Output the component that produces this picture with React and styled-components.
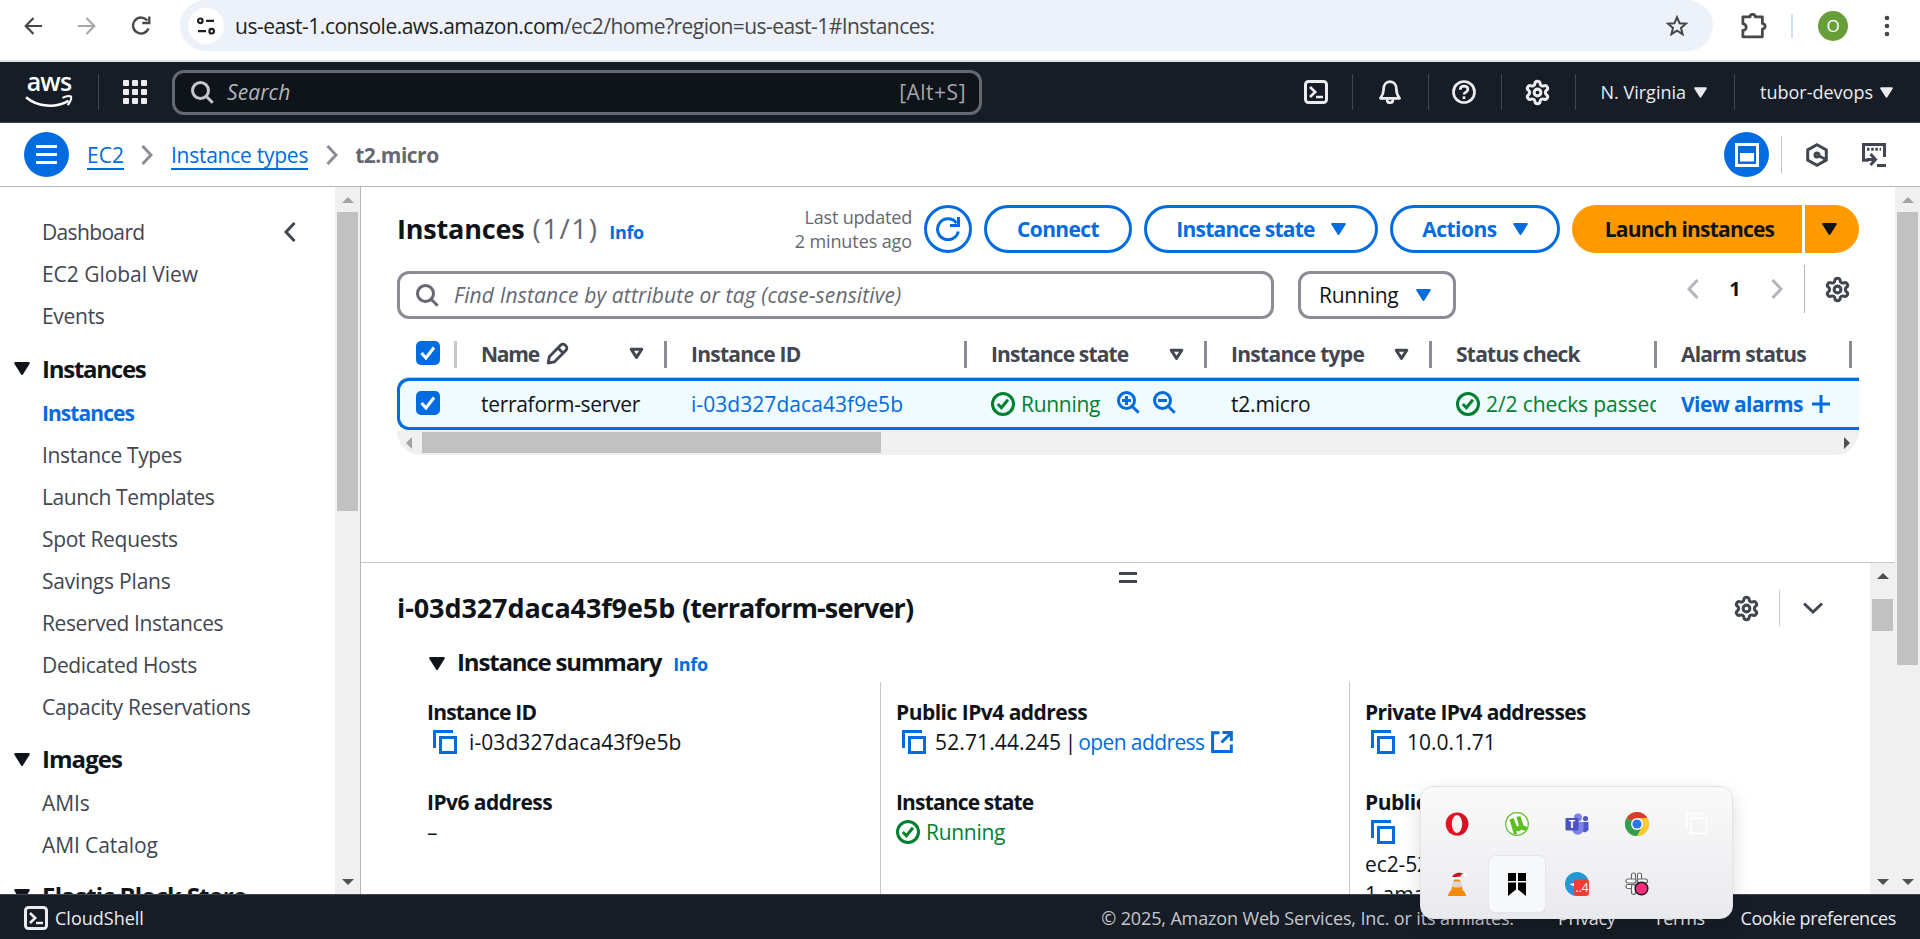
import React from "react";
import styled, { createGlobalStyle, css } from "styled-components";
import { Settings } from "lucide-react";

const BLUE = "#006ce0";
const INK = "#0f141a";
const GREY = "#424650";
const GREEN = "#00802f";

const Global = createGlobalStyle`
  * { box-sizing: border-box; }
  body { margin: 0; background: #fff; overflow: hidden; }
  svg { display: block; flex: none; }
`;

const Page = styled.div`
  width: 1920px;
  height: 939px;
  position: relative;
  display: flex;
  flex-direction: column;
  overflow: hidden;
  font: 400 21px/30px "Open Sans", "Noto Sans", sans-serif;
  color: ${INK};
`;

const Text = styled.span`
  white-space: pre;
  letter-spacing: ${(p) => p.$ls || 0}px;
  ${(p) => p.$size && css`font-size: ${p.$size}px;`}
  ${(p) => p.$bold && css`font-weight: 700;`}
  ${(p) => p.$italic && css`font-style: italic;`}
  ${(p) => p.$color && css`color: ${p.$color};`}
`;
const Tint = styled.div`
  color: ${(p) => p.$color};
  padding-bottom: ${(p) => p.$lift || 0}px;
`;

const Spacer = styled.div`flex: 1;`;
const Gap = styled.div`flex: none; width: ${(p) => p.$w}px;`;
const Rule = styled.div`
  flex: none;
  width: ${(p) => p.$w || 1}px;
  height: ${(p) => p.$h}px;
  background: ${(p) => p.$color};
`;

/* ---------- icons ---------- */
const Svg = ({ w = 24, h = w, vb = `0 0 ${w} ${h}`, sw = 3, fill = "none", stroke = "currentColor", children, ...r }) => (
  <svg width={w} height={h} viewBox={vb} fill={fill} stroke={stroke} strokeWidth={sw} {...r}>{children}</svg>
);
const Caret = ({ w = 15, h = 12 }) => (
  <Svg w={w} h={h} vb="0 0 15 12" sw="2" fill="currentColor" strokeLinejoin="round"><path d="M1.2 1h12.6L7.5 11z" /></Svg>
);
const Sort = () => (
  <Svg w={15} h={13} sw="3" strokeLinejoin="round"><path d="M2.2 2.200h10.600L7.500 10.400z" /></Svg>
);
const Angle = ({ dir = "left", w = 12, h = 20 }) => (
  <Svg w={w} h={h} vb="0 0 12 20" sw="3"><path d={dir === "left" ? "M10.5 1 2 10l8.500 9" : "M1.500 1 10 10l-8.500 9"} /></Svg>
);
const AngleDown = () => <Svg w={20} h={12} sw="3"><path d="M1 1.500 10 10l9-8.500" /></Svg>;
const Magnifier = ({ w = 23, sw = 3, sign }) => (
  <Svg w={w} vb="0 0 23 23" sw={sw}>
    <circle cx="9.500" cy="9.500" r="8" />
    <path d="m15.200 15.200 6.500 6.500" />
    {sign && <path d={sign === "plus" ? "M5 9.500h9M9.500 5v9" : "M5 9.500h9"} />}
  </Svg>
);
const ShellIcon = () => (
  <Svg><rect x="1.500" y="1.500" width="21" height="21" rx="3" /><path d="m6 7 5.200 5-5.200 5M12 17h7" strokeWidth="2.600" /></Svg>
);
const Bell = () => (
  <Svg sw="2.700" strokeLinejoin="round"><path d="M5.600 9.500C5.600 5 8 1.700 12 1.700s6.400 3.300 6.400 7.800c0 4.500.9 5.800 3.200 8.800H2.400c2.300-3 3.200-4.300 3.200-8.800z" /><path d="M9.200 19v1.200a2.800 2.500 0 0 0 5.600 0V19" /></Svg>
);
const Help = () => (
  <Svg sw="2.700"><circle cx="12" cy="12" r="10.500" /><path d="M8.200 9.700C8.300 7.300 10 6.200 12 6.200c2.200 0 3.900 1.200 3.900 3.200 0 2.600-3.900 2.700-3.900 5.200" /><path d="M12 16.300v2.800" /></Svg>
);
const Gear = () => <Settings size={27} strokeWidth={2.7} />;
const StatusOk = () => (
  <Svg><circle cx="12" cy="12" r="10.500" /><path d="m6.800 12 3.600 3.800 6.500-8" /></Svg>
);
const Copy = () => (
  <Svg stroke={BLUE}><path d="M20 1.500H1.500V18" /><rect x="7.500" y="7.500" width="15" height="15" /></Svg>
);
const External = () => (
  <Svg w={22} sw="3"><path d="M8.500 1.800H1.600v18.700h18.700V13.500" /><path d="M11.500 1.600h8.800v8.300M20 2l-9.500 9.500" /></Svg>
);
const Pencil = () => (
  <Svg w={23} sw="2.800" strokeLinejoin="round"><path d="M2.200 21l1.100-6.300L14.800 3a3 3 0 0 1 4.200 0l1 1a3 3 0 0 1 0 4.200L8.500 19.800z" /><path d="m12 6 5 5" /></Svg>
);
const AwsSmile = () => (
  <Svg w={48} h={13} sw="2.500"><path d="M1 2.200C13 12.500 31 13 43.500 5.800" /><path d="M37.500 2.800c3-1.500 7-2 8.500-1.300.8 1.600-.7 6-3.400 8.600" strokeWidth="2" /></Svg>
);
const AppGrid = () => (
  <Svg stroke="none" fill="currentColor">{[0, 9, 18].map((y) => [0, 9, 18].map((x) => <rect key={x + "-" + y} x={x} y={y} width="6" height="6" rx="1" />))}</Svg>
);

/* ---------- browser bar ---------- */
const BrowserBar = styled.div`
  height: 62px;
  flex: none;
  display: flex;
  border-bottom: 2px solid #dee5e4;
  color: #474747;
`;
const NavButtons = styled.div`
  width: 180px;
  height: 51px;
  padding-left: 24px;
  display: flex;
  align-items: center;
  gap: 35.5px;
`;
const UrlPill = styled.div`
  width: 1533px;
  height: 51px;
  border-radius: 26px;
  background: #ecf1fa;
  display: flex;
  align-items: center;
  padding: 0 25px 0 8px;
`;
const SiteInfo = styled.div`
  width: 36px;
  height: 36px;
  border-radius: 50%;
  background: #fff;
  display: grid;
  place-items: center;
  margin-right: 11px;
`;
const BrowserTools = styled.div`
  flex: 1;
  height: 51px;
  display: flex;
  align-items: center;
  padding-left: 28px;
`;
const Avatar = styled.div`
  width: 30px;
  height: 30px;
  border-radius: 50%;
  background: #689f38;
  color: #fff;
  display: grid;
  place-items: center;
  font-size: 17px;
`;

/* ---------- console header ---------- */
const ConsoleHeader = styled.header`
  height: 61px;
  flex: none;
  background: #161d26;
  border-bottom: 1px solid #424650;
  color: #ebebf0;
  display: flex;
  align-items: center;
  padding-left: 25px;
`;
const AwsLogo = styled.div`
  width: 48px;
  height: 36px;
  display: flex;
  flex-direction: column;
  align-items: center;
  color: #fff;
  span { font-size: 25px; line-height: 21px; height: 24px; font-weight: 600; letter-spacing: -0.8px; margin-top: -3px; }
`;
const SearchBox = styled.div`
  width: 810px;
  height: 45px;
  border: 3px solid #656871;
  border-radius: 12px;
  background: #0f141a;
  display: flex;
  align-items: center;
  padding: 0 13px 0 16px;
  color: #c6c6cd;
`;
const IconSlot = styled.div`
  width: ${(p) => p.$w}px;
  padding-right: ${(p) => p.$pr || 0}px;
  display: grid;
  place-items: center;
  flex: none;
`;

/* ---------- breadcrumb bar ---------- */
const CrumbBar = styled.nav`
  height: 64px;
  flex: none;
  border-bottom: 1px solid #b4b4bb;
  display: flex;
  align-items: center;
  padding-left: 24px;
  color: #8c8c94;
`;
const RoundButton = styled.div`
  width: 45px;
  height: 45px;
  border-radius: 50%;
  background: ${BLUE};
  color: #fff;
  display: grid;
  place-items: center;
  flex: none;
`;
const CrumbLink = styled(Text)`
  color: ${BLUE};
  border-bottom: 2px solid ${BLUE};
  line-height: 26px;
  margin-top: 2px;
`;

/* ---------- body ---------- */
const Body = styled.div`
  height: 707px;
  flex: none;
  display: flex;
`;
const Sidebar = styled.aside`
  width: 335px;
  padding-top: 24px;
  overflow: hidden;
  color: ${GREY};
`;
const NavItem = styled.div`
  height: 42px;
  padding: 0 39px 0 42px;
  display: flex;
  align-items: center;
  justify-content: space-between;
`;
const NavGroup = styled.div`
  height: 54.5px;
  margin-top: ${(p) => p.$mt || 0}px;
  padding: 9px 0 0 14px;
  display: flex;
  align-items: center;
  gap: 12px;
  color: ${INK};
`;

const VTrack = styled.div`
  width: 25px;
  flex: none;
  background: #f0f0f0;
  display: flex;
  flex-direction: column;
  align-items: center;
  padding: 10px 0 9px;
`;
const VThumb = styled.div`
  width: 21px;
  height: ${(p) => p.$h}px;
  margin-top: ${(p) => p.$mt}px;
  background: #c1c1c1;
`;
const Tri = styled.div`
  width: 0;
  height: 0;
  flex: none;
  border: 6px solid transparent;
  ${(p) => p.$d === "up" && css`border-width: 0 6px 6px; border-bottom-color: ${p.$c};`}
  ${(p) => p.$d === "down" && css`border-width: 6px 6px 0; border-top-color: ${p.$c};`}
  ${(p) => p.$d === "left" && css`border-width: 6px 6px 6px 0; border-right-color: ${p.$c};`}
  ${(p) => p.$d === "right" && css`border-width: 6px 0 6px 6px; border-left-color: ${p.$c};`}
`;
const VScroll = ({ thumb, mt, atTop }) => (
  <VTrack>
    <Tri $d="up" $c={atTop ? "#a3a3a3" : "#505050"} />
    <VThumb $h={thumb} $mt={mt} />
    <Spacer />
    <Tri $d="down" $c="#505050" />
  </VTrack>
);

const Main = styled.main`
  flex: 1;
  min-width: 0;
  border-left: 1px solid #b4b4bb;
  display: flex;
  flex-direction: column;
`;
const ListPanel = styled.section`
  height: 375px;
  padding: 18px 36px 0;
`;
const TitleRow = styled.div`
  height: 48px;
  display: flex;
  align-items: center;
`;
const TitleText = styled.div`
  display: flex;
  align-items: baseline;
  height: 38px;
  line-height: 36px;
`;
const Updated = styled.div`
  display: flex;
  flex-direction: column;
  align-items: flex-end;
  line-height: 24px;
  color: #656871;
  margin-right: 12px;
`;
const Button = styled.div`
  height: 48px;
  width: ${(p) => p.$w}px;
  border: 3px solid ${BLUE};
  border-radius: 24px;
  color: ${BLUE};
  display: flex;
  align-items: center;
  justify-content: center;
  gap: 16px;
  margin-right: 12px;
`;
const LaunchPart = styled.div`
  width: ${(p) => p.$w}px;
  height: 48px;
  background: #ff9900;
  color: ${INK};
  display: grid;
  place-items: center;
  border-radius: ${(p) => (p.$end ? "0 24px 24px 0" : "24px 0 0 24px")};
  margin-right: ${(p) => (p.$end ? 0 : 3)}px;
  padding: ${(p) => (p.$end ? "0 6px 0 0" : "0 0 0 5px")};
`;
const FilterRow = styled.div`
  height: 48px;
  margin-top: 18px;
  display: flex;
`;
const Field = styled.div`
  width: ${(p) => p.$w}px;
  height: 48px;
  border: 3px solid #8c8c94;
  border-radius: 12px;
  display: flex;
  align-items: center;
  padding: 0 17px 0 ${(p) => p.$pl}px;
  color: #656871;
`;
const Pager = styled.div`
  height: 48px;
  margin: -6px 8px 0 0;
  display: flex;
  align-items: center;
  color: #b4b4bb;
`;
const Table = styled.div`margin-top: 22px;`;
const COLS = "60px 210px 300px 240px 225px 225px 195px 7px";
const HeadRow = styled.div`
  height: 36px;
  display: grid;
  grid-template-columns: ${COLS};
  color: ${GREY};
`;
const HeadCell = styled.div`
  height: 27px;
  border-right: 3px solid ${(p) => p.$sep || "#8c8c94"};
  padding: 0 ${(p) => p.$pr || 20}px ${(p) => p.$pb || 1}px ${(p) => p.$pl || 24}px;
  display: flex;
  align-items: center;
`;
const DataRow = styled.div`
  height: 52px;
  border: solid ${BLUE};
  border-width: 3px 0 3px 3px;
  border-radius: 12px 0 0 12px;
  background: #f0fbff;
  box-shadow: 0 -1px 0 #c6c6cd;
  display: grid;
  grid-template-columns: ${COLS};
  margin-top: 1px;
`;
const Cell = styled.div`
  height: 46px;
  margin-right: 4px;
  padding: 0 0 ${(p) => p.$pb ?? 1}px ${(p) => p.$pl ?? 21}px;
  display: flex;
  align-items: center;
  overflow: hidden;
  color: ${(p) => p.$color || INK};
`;
const Box = styled.div`
  width: 24px;
  height: 24px;
  flex: none;
  border-radius: 5px;
  background: ${BLUE};
  color: #fff;
  display: grid;
  place-items: center;
`;
const Checkbox = () => <Box><Svg w={16} h={14} sw="3"><path d="m1.500 7 4.500 5L14 1.500" /></Svg></Box>;
const HTrack = styled.div`
  height: 25px;
  border-radius: 0 0 24px 24px;
  background: #f0f0f0;
  display: flex;
  align-items: center;
  padding: 0 9px;
`;
const HThumb = styled.div`
  width: 459px;
  height: 21px;
  margin-left: 10px;
  background: #c1c1c1;
`;

const SplitPanel = styled.section`
  flex: 1;
  min-height: 0;
  border-top: 1px solid #c6c6cd;
  display: flex;
`;
const SplitContent = styled.div`
  flex: 1;
  min-width: 0;
  overflow: hidden;
`;
const Grip = styled.div`
  width: 18px;
  height: 11px;
  margin: 9px 0 0 758px;
  border: solid ${GREY};
  border-width: 3px 0;
`;
const SplitHead = styled.div`
  height: 36px;
  margin-top: 7px;
  padding: 0 47px 0 36px;
  display: flex;
  align-items: center;
  color: ${GREY};
`;
const SummaryHead = styled.div`
  height: 36px;
  margin: 19px 0 0 68px;
  display: flex;
  align-items: center;
`;
const Baseline = styled.div`
  display: flex;
  align-items: baseline;
  margin-left: 12px;
`;
const Details = styled.div`
  height: 240px;
  margin-top: 1px;
  padding-left: 50px;
  display: grid;
  grid-template-columns: 469px 469px 1fr;
`;
const DetailCol = styled.div`
  padding: 15px 0 0 ${(p) => (p.$first ? 16 : 15)}px;
  ${(p) => !p.$first && css`border-left: 1px solid #c6c6cd;`}
`;
const Line = styled.div`
  height: 30px;
  padding-left: ${(p) => p.$pl || 0}px;
  display: flex;
  align-items: center;
  color: ${(p) => p.$color || INK};
`;
const LineGap = styled.div`height: ${(p) => p.$h || 30}px;`;

const Footer = styled.footer`
  height: 45px;
  flex: none;
  border-top: 1px solid #424650;
  background: #161d26;
  color: #ebebf0;
  display: flex;
  align-items: center;
  padding: 2px 24px 0 24px;
`;

/* ---------- system tray flyout ---------- */
const Tray = styled.div`
  position: absolute;
  left: 1420px;
  top: 786px;
  width: 313px;
  height: 133px;
  border: 1px solid #e3e3e5;
  border-radius: 13px;
  background: linear-gradient(#fafafa, #e9eaee);
  box-shadow: 0 8px 20px rgba(0, 0, 0, 0.14);
  display: grid;
  grid-template-columns: repeat(5, 60px);
  grid-template-rows: 60px 60px;
  padding: 7px 6px;
`;
const TrayTile = styled.div`
  display: grid;
  place-items: center;
  margin: 2px;
  border-radius: 6px;
  ${(p) => p.$on && css`background: #f7f8fa; box-shadow: 0 0 0 1px #e6e7e9, 0 1px 2px #d4d5d8;`}
`;
const TrayText = styled.text`
  font-family: "Open Sans", sans-serif;
  stroke: none;
`;

const Tray24 = (p) => <Svg w={24} sw="0" {...p} />;

const trayIcons = [
  <Tray24 key="opera"><ellipse cx="12" cy="12" rx="11.300" ry="11.500" fill="#e81227" /><path d="M12 .5a11.400 11.500 0 0 1 0 23z" fill="#c80f20" opacity=".55" /><ellipse cx="12" cy="12" rx="5.200" ry="9" fill="#f4f4f5" /></Tray24>,
  <Tray24 key="ut"><circle cx="12" cy="12" r="11.300" fill="#fff" stroke="#5bbf21" strokeWidth="1.200" /><path d="M4.500 7.500 8.500 6l3 7.500c.6 1.500 2.700.8 2.200-.8L11.300 5l4-1 3.300 9.500 3.600 1.500-1 3.300c-2 .7-3.700.3-4.700-1-1 2-4 2.500-5.300 1.500l.9 3.400-3.200.3z" fill="#5bbf21" /></Tray24>,
  <Tray24 key="teams"><circle cx="13" cy="5.500" r="4" fill="#7b83eb" /><circle cx="20.500" cy="6.500" r="2.600" fill="#5059c9" /><path d="M16 10h7.500v7.500a4 4 0 0 1-6 2z" fill="#5059c9" /><path d="M7 10h11.500v7a5.700 5.700 0 0 1-11.500 0z" fill="#7b83eb" /><rect x=".5" y="6" width="13" height="12.500" rx="1" fill="#4b53bc" /><TrayText x="3.700" y="16" fontSize="11" fontWeight="700" fill="#fff">T</TrayText></Tray24>,
  <Tray24 key="chrome"><circle cx="12" cy="12" r="12" fill="#fcc934" /><path d="M12 12 1.600 6A12 12 0 0 1 22.400 6z" fill="#db3a2d" /><path d="M1.600 6A12 12 0 0 0 12 24l5.200-9L12 12z" fill="#2f9e4f" /><path d="M12 6h10.400A12 12 0 0 1 12 24l5.200-9z" fill="#fcc934" /><circle cx="12" cy="12" r="6" fill="#fff" /><circle cx="12" cy="12" r="4.600" fill="#2a76ea" /></Tray24>,
  <Tray24 key="copy" sw="1.500" stroke="#fff"><path d="M19 1.500H2V17" /><rect x="6" y="6" width="15.500" height="15.500" /></Tray24>,
  <Tray24 key="vlc"><path d="M5 19h14l2.500 5h-19z" fill="#f58a07" /><path d="M9.500 6h5l4 15c-3 1.800-10 1.800-13 0z" fill="#f58a07" /><path d="M8.500 9.500h7l1.400 5c-2 1.300-7.800 1.300-9.800 0z" fill="#d9d9d9" /><path d="M7 5.500C8 1 14 -.5 19 1.500c-2 .2-3 1-3.500 3z" fill="#d4101a" /><path d="M6.500 5h9.500v2.500H6.500z" fill="#fff" /><circle cx="20" cy="2.500" r="2" fill="#fff" /></Tray24>,
  <Tray24 key="mark" fill="#000"><path d="M3 1h8v8H3zM13 1h8v8h-8zM3 10.500h8v7L3 24zM13 10.500h8V24l-8-6.500z" /></Tray24>,
  <Tray24 key="telegram"><circle cx="12" cy="12" r="12" fill="#2498d3" /><path d="m4.500 12.500 7-2.500v5z" fill="#fff" /><rect x="9" y="7.500" width="15" height="16.500" rx="3" fill="#f43c35" /><TrayText x="10.500" y="20" fontSize="12" fill="#fff">..4</TrayText></Tray24>,
  <Tray24 key="slack" stroke="#666" sw="1.200" fill="#fff"><rect x="6.500" y="1" width="4" height="10" rx="2" /><rect x="12.500" y="1" width="4" height="10" rx="2" /><rect x="1" y="7" width="10" height="4" rx="2" /><rect x="12.500" y="7" width="10" height="4" rx="2" /><rect x="1" y="12.500" width="10" height="4" rx="2" /><rect x="6.500" y="12.500" width="4" height="10" rx="2" /><circle cx="16.500" cy="16.500" r="6.300" fill="#f72e7c" stroke="#1b1b1b" strokeWidth="1.500" /></Tray24>,
];

const services = [["Dashboard", -0.65], ["EC2 Global View", -0.05], ["Events", -0.3]];
const instanceLinks = [
  ["Instance Types", -0.35], ["Launch Templates", -0.39], ["Spot Requests", -0.3], ["Savings Plans", -0.2],
  ["Reserved Instances", -0.4], ["Dedicated Hosts", -0.35], ["Capacity Reservations", -0.25],
];
const imageLinks = [["AMIs", -0.1], ["AMI Catalog", -0.1]];

export default function App() {
  return (
    <Page>
      <Global />
      <BrowserBar>
        <NavButtons>
          <Svg w={18} h={18} sw="2.200"><path d="M18 9H2M9.500 1 1.700 9l7.800 8" /></Svg>
          <Svg w={18} h={18} sw="2.200" stroke="#a8a8a8"><path d="M0 9h16M8.500 1l7.800 8-7.800 8" /></Svg>
          <Svg w={20} h={19} sw="2.300"><path d="M17.500 12.500A8 8 0 1 1 16.300 4.500" /><path d="M18.300.5V7h-7" /></Svg>
        </NavButtons>
        <UrlPill>
          <SiteInfo>
            <Svg w={18} h={18} sw="2.200" stroke="#1f1f1f"><circle cx="3.300" cy="3.800" r="2.300" /><path d="M9 3.800h8M1 14.200h8" /><circle cx="14.700" cy="14.200" r="2.300" /></Svg>
          </SiteInfo>
          <Text $ls={-0.5} $color="#1f1f1f">us-east-1.console.aws.amazon.com</Text>
          <Text $ls={-0.55}>/ec2/home?region=us-east-1#Instances:</Text>
          <Spacer />
          <Svg w={22} h={21} sw="2"><path d="m11 2.200 2.500 6 6.500.5-5 4.200 1.600 6.300L11 15.700l-5.600 3.500L7 12.900 2 8.700l6.500-.5z" /></Svg>
        </UrlPill>
        <BrowserTools>
          <Svg w={26} h={26} vb="0.500 1 23.500 23.500" sw="2.500"><path d="M2.200 4.500h6.500a2.200 2.200 0 0 1 4.600 0h6.500v6a2.400 2.400 0 0 1 0 5v7H2.200v-5.700a3 3 0 0 0 0-6z" strokeLinejoin="round" /></Svg>
          <Gap $w={24} />
          <Rule $h={24} $w={2} $color="#d0e0fb" />
          <Gap $w={25} />
          <Avatar>O</Avatar>
          <Gap $w={36} />
          <Svg w={6} h={22} stroke="none" fill="#474747"><circle cx="3" cy="3" r="2.300" /><circle cx="3" cy="11" r="2.300" /><circle cx="3" cy="19" r="2.300" /></Svg>
        </BrowserTools>
      </BrowserBar>

      <ConsoleHeader>
        <AwsLogo><span>aws</span><AwsSmile /></AwsLogo>
        <Gap $w={25} /><Rule $h={36} $color="#424650" /><Gap $w={24} />
        <AppGrid />
        <Gap $w={25} />
        <SearchBox>
          <Magnifier />
          <Gap $w={13} />
          <Text $italic $ls={0.1} $color="#b4b4bb">Search</Text>
          <Spacer />
          <Text $ls={0.5} $color="#a4a4ad">[Alt+S]</Text>
        </SearchBox>
        <Spacer />
        <IconSlot $w={72}><ShellIcon /></IconSlot><Rule $h={36} $color="#424650" />
        <IconSlot $w={75}><Bell /></IconSlot><Rule $h={36} $color="#424650" />
        <IconSlot $w={72} $pr={2}><Help /></IconSlot><Rule $h={36} $color="#424650" />
        <IconSlot $w={73} $pr={1}><Gear /></IconSlot><Rule $h={36} $color="#424650" />
        <Gap $w={25} />
        <Text $size={18}>N. Virginia</Text><Gap $w={8} /><Caret w={13} h={11} />
        <Gap $w={27} /><Rule $h={36} $color="#424650" /><Gap $w={25} />
        <Text $size={18}>tubor-devops</Text><Gap $w={7} /><Caret w={13} h={11} />
        <Gap $w={27} />
      </ConsoleHeader>

      <CrumbBar>
        <RoundButton><Svg w={21} h={19}><path d="M0 1.500h21M0 9.500h21M0 17.500h21" /></Svg></RoundButton>
        <Gap $w={18} />
        <CrumbLink $ls={0}>EC2</CrumbLink>
        <Gap $w={17} /><Angle dir="right" /><Gap $w={18} />
        <CrumbLink $ls={-0.25}>Instance types</CrumbLink>
        <Gap $w={18} /><Angle dir="right" /><Gap $w={17} />
        <Text $bold $ls={-0.5} $color="#656871">t2.micro</Text>
        <Spacer />
        <RoundButton><Svg><rect x="1.500" y="1.500" width="21" height="21" /><rect x="5" y="10" width="14" height="8.500" fill="#fff" stroke="none" /></Svg></RoundButton>
        <Gap $w={12} /><Rule $h={37} $color="#c6c6cd" /><Gap $w={23} />
        <Svg stroke={GREY}><path d="m12 1.800 9.300 5.200v10L12 22.200 2.700 17V7z" /><circle cx="12" cy="12" r="2" /><path d="m12 12 8 4" /></Svg>
        <Gap $w={33} />
        <Svg stroke={GREY}><path d="M6.500 17.300H1.500V1.500h21V14M15 22.500h9M4.500 16.500h8M8.500 11l5 5.500-5 5.500" /><path d="M5 6.300h14" strokeDasharray="2.500 1.700" /></Svg>
        <Gap $w={34} />
      </CrumbBar>

      <Body>
        <Sidebar>
          {services.map(([t, ls], i) => (
            <NavItem key={t}><Text $ls={ls}>{t}</Text>{i === 0 && <Angle />}</NavItem>
          ))}
          <NavGroup><Caret w={16} h={13} /><Text $bold $size={24} $ls={-1.25}>Instances</Text></NavGroup>
          <NavItem><Text $bold $ls={-0.94} $color={BLUE}>Instances</Text></NavItem>
          {instanceLinks.map(([t, ls]) => <NavItem key={t}><Text $ls={ls}>{t}</Text></NavItem>)}
          <NavGroup><Caret w={16} h={13} /><Text $bold $size={24} $ls={-0.95}>Images</Text></NavGroup>
          {imageLinks.map(([t, ls]) => <NavItem key={t}><Text $ls={ls}>{t}</Text></NavItem>)}
          <NavGroup $mt={-2}><Caret w={16} h={13} /><Text $bold $size={24} $ls={-0.76}>Elastic Block Store</Text></NavGroup>
        </Sidebar>
        <VScroll atTop thumb={299} mt={9} />

        <Main>
          <ListPanel>
            <TitleRow>
              <TitleText>
                <Text $bold $size={27} $ls={-0.18}>Instances</Text>
                <Gap $w={8} />
                <Text $size={28} $ls={1.4} $color="#656871">(1/1)</Text>
                <Gap $w={11} />
                <Text $bold $size={18} $ls={-0.35} $color={BLUE}>Info</Text>
              </TitleText>
              <Spacer />
              <Updated>
                <Text $size={18} $ls={-0.18}>Last updated</Text>
                <Text $size={18} $ls={-0.1}>2 minutes ago</Text>
              </Updated>
              <Button $w={48}><Svg><path d="M22.300 14.500A10.500 10.500 0 1 1 20.500 6" /><path d="M22.500 0v8.500H14" /></Svg></Button>
              <Button $w={148}><Text $bold $ls={-0.62}>Connect</Text></Button>
              <Button $w={234}><Text $bold $ls={-0.77}>Instance state</Text><Caret /></Button>
              <Button $w={170}><Text $bold $ls={-0.51}>Actions</Text><Caret /></Button>
              <LaunchPart $w={230}><Text $bold $ls={-0.79}>Launch instances</Text></LaunchPart>
              <LaunchPart $w={54} $end><Caret /></LaunchPart>
            </TitleRow>
            <FilterRow>
              <Field $w={877} $pl={16}>
                <Magnifier />
                <Gap $w={15} />
                <Text $italic $ls={0.14}>Find Instance by attribute or tag (case-sensitive)</Text>
              </Field>
              <Gap $w={24} />
              <Field $w={158} $pl={18}>
                <Text $ls={-0.24} $color={INK}>Running</Text><Gap $w={17} /><Tint $color={BLUE}><Caret /></Tint>
              </Field>
              <Spacer />
              <Pager>
                <Angle />
                <IconSlot $w={72}><Text $bold $size={20} $color={INK}>1</Text></IconSlot>
                <Angle dir="right" />
                <Gap $w={21} /><Rule $h={48} $color="#b4b4bb" /><Gap $w={19} />
                <Tint $color={GREY}><Gear /></Tint>
              </Pager>
            </FilterRow>
            <Table>
              <HeadRow>
                <HeadCell $pl={19} $pr={1} $pb={3} $sep="#c6c6cd"><Checkbox /></HeadCell>
                <HeadCell $pb={2}><Text $bold $ls={-1.2}>Name</Text><Gap $w={7} /><Pencil /><Spacer /><Sort /></HeadCell>
                <HeadCell><Text $bold $ls={-0.77}>Instance ID</Text></HeadCell>
                <HeadCell><Text $bold $ls={-0.85}>Instance state</Text><Spacer /><Sort /></HeadCell>
                <HeadCell><Text $bold $ls={-0.7}>Instance type</Text><Spacer /><Sort /></HeadCell>
                <HeadCell><Text $bold $ls={-0.76}>Status check</Text></HeadCell>
                <HeadCell><Text $bold $ls={-0.82}>Alarm status</Text></HeadCell>
              </HeadRow>
              <DataRow>
                <Cell $pl={16} $pb={2}><Checkbox /></Cell>
                <Cell><Text $ls={-0.3}>terraform-server</Text></Cell>
                <Cell $color={BLUE}><Text $ls={0.06}>i-03d327daca43f9e5b</Text></Cell>
                <Cell $color={GREEN} $pb={0}>
                  <StatusOk /><Gap $w={6} /><Text $ls={-0.3}>Running</Text><Gap $w={17} />
                  <Tint $color={BLUE} $lift={3}><Magnifier sign="plus" /></Tint><Gap $w={13} />
                  <Tint $color={BLUE} $lift={3}><Magnifier sign="minus" /></Tint>
                </Cell>
                <Cell><Text $ls={-0.19}>t2.micro</Text></Cell>
                <Cell $color={GREEN}><StatusOk /><Gap $w={6} /><Text $ls={-0.1}>2/2 checks passed</Text></Cell>
                <Cell $color={BLUE}><Text $bold $ls={-0.58}>View alarms</Text><Gap $w={9} /><Svg w={18}><path d="M0 9h18M9 0v18" /></Svg></Cell>
              </DataRow>
              <HTrack>
                <Tri $d="left" $c="#a3a3a3" />
                <HThumb />
                <Spacer />
                <Tri $d="right" $c="#505050" />
              </HTrack>
            </Table>
          </ListPanel>

          <SplitPanel>
            <SplitContent>
              <Grip />
              <SplitHead>
                <Text $bold $size={27} $ls={-0.1} $color={INK}>i-03d327daca43f9e5b </Text>
                <Text $bold $size={27} $ls={-0.86} $color={INK}>(terraform-server)</Text>
                <Spacer />
                <Gear /><Gap $w={19} /><Rule $h={36} $color="#c6c6cd" /><Gap $w={23} /><AngleDown />
              </SplitHead>
              <SummaryHead>
                <Caret w={16} h={13} />
                <Baseline>
                  <Text $bold $size={24} $ls={-1.17}>Instance summary</Text>
                  <Gap $w={12} />
                  <Text $bold $size={18} $ls={-0.35} $color={BLUE}>Info</Text>
                </Baseline>
              </SummaryHead>
              <Details>
                <DetailCol $first>
                  <Line><Text $bold $ls={-0.8}>Instance ID</Text></Line>
                  <Line $pl={6}><Copy /><Gap $w={12} /><Text $ls={0.08}>i-03d327daca43f9e5b</Text></Line>
                  <LineGap />
                  <Line><Text $bold $ls={-0.55}>IPv6 address</Text></Line>
                  <Line><Text>–</Text></Line>
                </DetailCol>
                <DetailCol>
                  <Line><Text $bold $ls={-0.52}>Public IPv4 address</Text></Line>
                  <Line $pl={6}>
                    <Copy /><Gap $w={9} /><Text $ls={0.13}>52.71.44.245</Text><Text $ls={-1.8}> | </Text>
                    <Text $ls={-0.6} $color={BLUE}>open address</Text><Gap $w={7} />
                    <Tint $color={BLUE}><External /></Tint>
                  </Line>
                  <LineGap />
                  <Line><Text $bold $ls={-0.85}>Instance state</Text></Line>
                  <Line $color={GREEN}><StatusOk /><Gap $w={6} /><Text $ls={-0.3}>Running</Text></Line>
                </DetailCol>
                <DetailCol>
                  <Line><Text $bold $ls={-0.66}>Private IPv4 addresses</Text></Line>
                  <Line $pl={6}><Copy /><Gap $w={12} /><Text $ls={0.02}>10.0.1.71</Text></Line>
                  <LineGap />
                  <Line><Text $bold $ls={-0.47}>Public IPv4 DNS</Text></Line>
                  <Line $pl={6}><Copy /></Line>
                  <LineGap $h={2} />
                  <Line><Text $ls={-0.1}>ec2-52-71-44-245.compute-</Text></Line>
                  <Line><Text>1.amazonaws.com</Text></Line>
                </DetailCol>
              </Details>
            </SplitContent>
            <VScroll thumb={32} mt={20} />
          </SplitPanel>
        </Main>
        <VScroll atTop thumb={453} mt={9} />
      </Body>

      <Footer>
        <ShellIcon />
        <Gap $w={7} />
        <Text $size={18}>CloudShell</Text>
        <Spacer />
        <Text $size={18} $ls={-0.14} $color="#c6c6cd">© 2025, Amazon Web Services, Inc. or its affiliates.</Text>
        <Gap $w={44} />
        <Text $size={18} $ls={-0.25}>Privacy</Text>
        <Gap $w={38} />
        <Text $size={18} $ls={-0.25}>Terms</Text>
        <Gap $w={35.5} />
        <Text $size={18} $ls={-0.37}>Cookie preferences</Text>
      </Footer>

      <Tray>
        {trayIcons.map((icon, i) => <TrayTile key={i} $on={i === 6}>{icon}</TrayTile>)}
      </Tray>
    </Page>
  );
}
